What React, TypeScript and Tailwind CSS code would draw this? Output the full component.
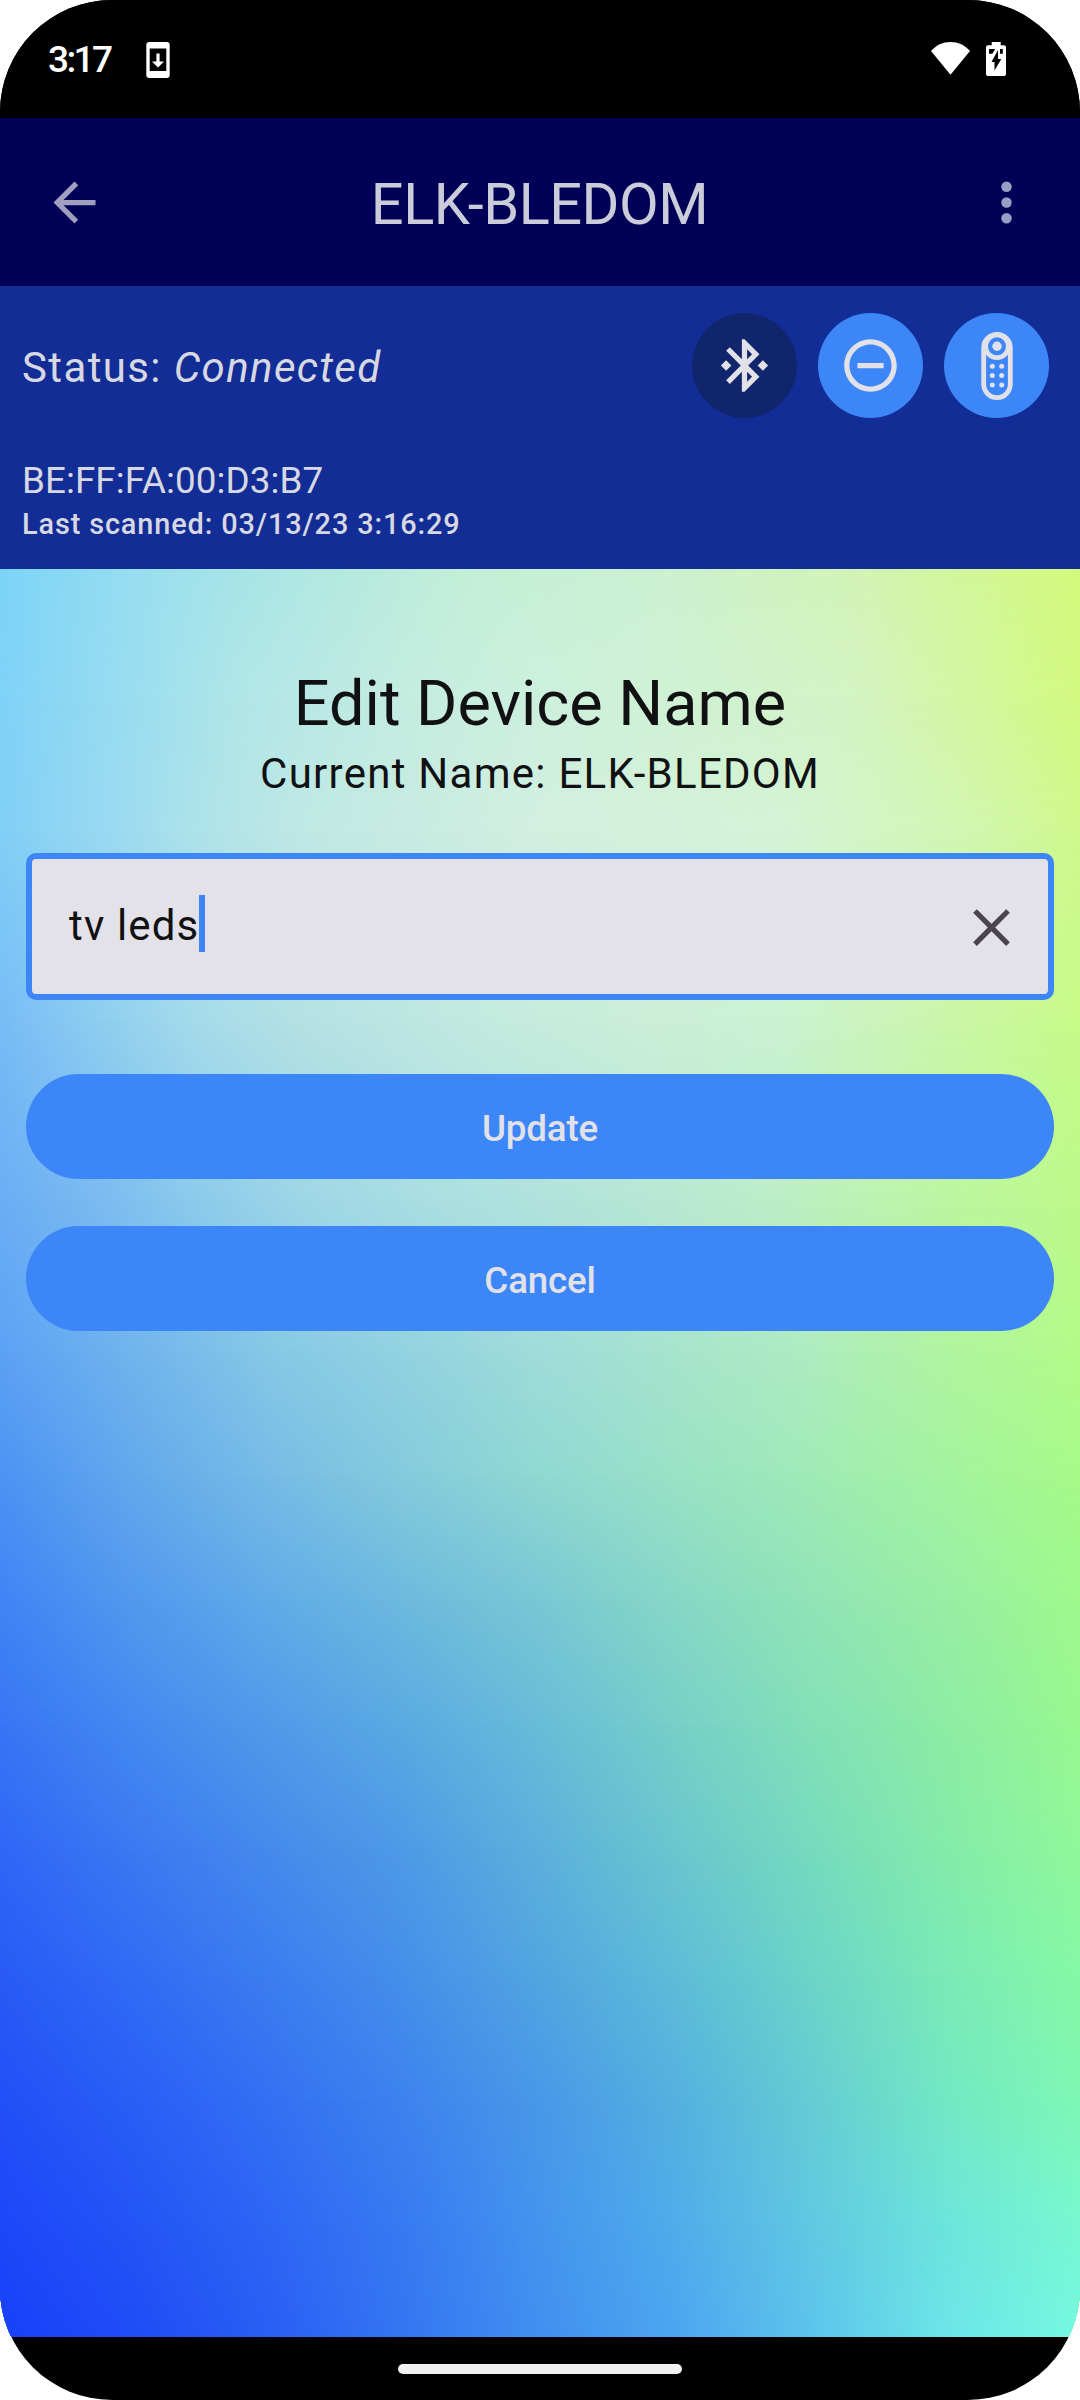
import React from "react";

// Mesh backdrop: each band is a horizontal gradient that fades in over the one above it.
const bands = [
  "bg-[linear-gradient(90deg,#7cd4f8_0%,#9de0ee_15%,#b2e9e0_30%,#c5efd8_44%,#ccf1d2_61%,#d2f4b4_80%,#d3f890_93%,#d2fb7c_100%)]",
  "bg-[linear-gradient(90deg,#7fd2f8_0%,#b0e6e8_22%,#c4ece0_37%,#cdf0de_50%,#d3f3c6_78%,#d2fa80_100%)] mask-[linear-gradient(180deg,transparent_0px,black_131px)]",
  "bg-[linear-gradient(90deg,#80cff6_0%,#98d8f2_9%,#ace2ea_18%,#c0e8e4_28%,#d2efe0_50%,#d4f3d6_72%,#d2f5c4_81%,#d1f6ac_91%,#cff98c_100%)] mask-[linear-gradient(180deg,transparent_131px,black_261px)]",
  "bg-[linear-gradient(90deg,#76bcf6_0%,#8ecdf0_9%,#a4dbea_18%,#b4e1e4_28%,#c4eadf_45%,#cceed9_60%,#cbf2d2_72%,#ccf4bc_81%,#caf7a0_91%,#c7fa88_100%)] mask-[linear-gradient(180deg,transparent_261px,black_451px)]",
  "bg-[linear-gradient(90deg,#6aaef5_0%,#7abaf0_9%,#8ccaec_18%,#9ed6e6_28%,#aadfe2_41%,#b8e8d2_63%,#bceec6_72%,#bcf3b0_81%,#bcf79a_91%,#bdf98a_100%)] mask-[linear-gradient(180deg,transparent_451px,black_631px)]",
  "bg-[linear-gradient(90deg,#5ba2f4_0%,#86c8e6_25%,#a0dcda_50%,#aeecc0_75%,#b0f4a0_87.5%,#b2fb88_100%)] mask-[linear-gradient(180deg,transparent_631px,black_781px)]",
  "bg-[linear-gradient(90deg,#4c93f4_0%,#62a9ec_12.5%,#76bce6_25%,#84cbdc_37.5%,#90d8d2_50%,#9ae1c6_62.5%,#a0eab6_75%,#a4f3a0_87.5%,#a7fa88_100%)] mask-[linear-gradient(180deg,transparent_781px,black_906px)]",
  "bg-[linear-gradient(90deg,#4084f5_0%,#5299ee_12.5%,#60abe8_25%,#6cbade_37.5%,#78c8d4_50%,#86d8c6_62.5%,#90e4b6_75%,#98eea4_87.5%,#9ef98c_100%)] mask-[linear-gradient(180deg,transparent_906px,black_1031px)]",
  "bg-[linear-gradient(90deg,#3775f5_0%,#4489f0_12.5%,#509ae9_25%,#5aaae2_37.5%,#68bcd8_50%,#76cfc8_62.5%,#82e0b8_75%,#8ceca4_87.5%,#97f890_100%)] mask-[linear-gradient(180deg,transparent_1031px,black_1156px)]",
  "bg-[linear-gradient(90deg,#2f67f6_0%,#3a79f2_12.5%,#458aec_25%,#4e9ae6_37.5%,#5cb0dc_50%,#6ac6ce_62.5%,#76dabe_75%,#84ebaa_87.5%,#90f89a_100%)] mask-[linear-gradient(180deg,transparent_1156px,black_1281px)]",
  "bg-[linear-gradient(90deg,#285bf6_0%,#306cf4_12.5%,#3b7df0_25%,#458fea_37.5%,#52a5e0_50%,#5ebcd8_62.5%,#6cd4c8_75%,#7aeab6_87.5%,#86f8a6_100%)] mask-[linear-gradient(180deg,transparent_1281px,black_1406px)]",
  "bg-[linear-gradient(90deg,#2250f7_0%,#295ff6_12.5%,#3370f3_25%,#3d83ee_37.5%,#4998e8_50%,#55b0df_62.5%,#64ccd4_75%,#72e8c4_87.5%,#7ef8b4_100%)] mask-[linear-gradient(180deg,transparent_1406px,black_1531px)]",
  "bg-[linear-gradient(90deg,#1d47f8_0%,#2355f6_12.5%,#2d66f4_25%,#377af2_37.5%,#4494ee_50%,#50acea_62.5%,#60c8e2_75%,#6ce4dc_87.5%,#78f8d0_100%)] mask-[linear-gradient(180deg,transparent_1531px,black_1656px)]",
  "bg-[linear-gradient(90deg,#1940f8_0%,#1f4df6_12.5%,#295ff4_25%,#3476f2_37.5%,#428ff0_50%,#4da5f0_62.5%,#5cc4ec_75%,#6ce4e8_87.5%,#76f8e2_100%)] mask-[linear-gradient(180deg,transparent_1656px,black_1767px)]",
];

function StatusBar() {
  return (
    <div className="flex h-[118px] items-start justify-between bg-black pr-[74px] pl-[48px] text-white">
      <div className="flex items-start">
        <span className="mt-[38px] w-[98px] text-[37px] leading-[44px] font-medium tracking-[-2.6px]">3:17</span>
        <svg className="mt-[42px] h-9 w-6" viewBox="0 0 24 36">
          <path fill="currentColor" fillRule="evenodd" d="M3.3 0H20.7A3 3 0 0 1 23.7 3V33A3 3 0 0 1 20.7 36H3.300A3 3 0 0 1 .3 33V3A3 3 0 0 1 3.300 0ZM3.700 6.500V29H20.300V6.500Z" />
          <path fill="currentColor" d="M10.400 11.500h3.200v8h4.400l-6 6-6-6h4.400z" />
        </svg>
      </div>
      <div className="mt-[42px] flex gap-4">
        <svg className="h-[34px] w-[39px]" viewBox="0 0 39 34">
          <path fill="currentColor" d="M19.500 32.700 0 9C5 3.200 12 0 19.500 0S34 3.200 39 9Z" />
        </svg>
        <svg className="h-[34px] w-5" viewBox="0 0 20 34">
          <path fill="currentColor" d="M5.700 0h9v3.300H18a2 2 0 0 1 2 2V32a2 2 0 0 1-2 2H2a2 2 0 0 1-2-2V5.300a2 2 0 0 1 2-2h3.700z" />
          <path fill="#000" d="M3 7h6.200l-2.900 4.700H3zM14 7h2.800v4.700H14zM12 8v9h3.300L8.500 28.500V20H5.500z" />
        </svg>
      </div>
    </div>
  );
}

function AppBar() {
  return (
    <header className="flex h-[168px] items-center justify-between bg-[#000056] pr-[42px] pl-[43px]">
      <svg className="size-[63px] text-[#a09fbf]" viewBox="0 0 24 24" fill="currentColor">
        <path d="M20 11H7.830l5.590-5.590L12 4l-8 8 8 8 1.410-1.410L7.830 13H20v-2z" />
      </svg>
      <h1 className="mt-1 mr-[2px] text-[57.75px] leading-[74px] tracking-[-0.5px] text-[#cbccd9]">ELK-BLEDOM</h1>
      <svg className="size-[63px] text-[#969fc4]" viewBox="0 0 24 24" fill="currentColor">
        <circle cx="12" cy="6" r="2" />
        <circle cx="12" cy="12" r="2" />
        <circle cx="12" cy="18" r="2" />
      </svg>
    </header>
  );
}

function BluetoothIcon() {
  return (
    <svg className="size-[63px]" viewBox="0 0 24 24" fill="currentColor">
      <path d="M7 12l-2-2-2 2 2 2 2-2zm10.710-4.290L12 2h-1v7.590L6.410 5 5 6.410 10.590 12 5 17.590 6.410 19 11 14.410V22h1l5.710-5.710-4.300-4.290 4.300-4.290zM13 5.830l1.880 1.880L13 9.590V5.830zm1.880 10.460L13 18.170v-3.760l1.880 1.880zM19 10l-2 2 2 2 2-2-2-2z" />
    </svg>
  );
}

function DisconnectIcon() {
  return (
    <svg className="size-[63px]" viewBox="0 0 24 24" fill="currentColor">
      <path d="M7 11v2h10v-2H7zm5-9C6.480 2 2 6.480 2 12s4.480 10 10 10 10-4.480 10-10S17.520 2 12 2zm0 18c-4.410 0-8-3.590-8-8s3.590-8 8-8 8 3.590 8 8-3.590 8-8 8z" />
    </svg>
  );
}

function RemoteIcon() {
  return (
    <svg className="h-[70px] w-[34px]" viewBox="0 0 34 70" fill="none" stroke="currentColor">
      <rect x="3.700" y="3.400" width="26.600" height="63.200" rx="13.300" strokeWidth="4.800" />
      <circle cx="17" cy="15.300" r="11.400" strokeWidth="4.800" />
      <g fill="currentColor" stroke="none">
        <circle cx="17" cy="15.300" r="4.700" />
        <circle cx="12.300" cy="35.300" r="2.500" />
        <circle cx="21.700" cy="35.300" r="2.500" />
        <circle cx="12.300" cy="44.600" r="2.500" />
        <circle cx="21.700" cy="44.600" r="2.500" />
        <circle cx="12.300" cy="54" r="2.500" />
        <circle cx="21.700" cy="54" r="2.500" />
      </g>
    </svg>
  );
}

function RoundButton({ label, dark, children }: { label: string; dark?: boolean; children: React.ReactNode }) {
  return (
    <button
      aria-label={label}
      className={`flex size-[105px] items-center justify-center rounded-full text-[#e2e1e8] ${dark ? "bg-[#10256c]" : "bg-[#3c86f7]"}`}
    >
      {children}
    </button>
  );
}

function DevicePanel() {
  return (
    <section className="h-[283px] bg-[#122e96] pt-[27px] pr-[31px] pl-[22px] text-[#d8d8e2]">
      <div className="flex h-[105px] items-center justify-between">
        <p className="mt-1 text-[42px] leading-[63px] tracking-[1.37px]">
          Status: <em>Connected</em>
        </p>
        <div className="flex gap-[21px]">
          <RoundButton label="Bluetooth" dark>
            <BluetoothIcon />
          </RoundButton>
          <RoundButton label="Disconnect">
            <DisconnectIcon />
          </RoundButton>
          <RoundButton label="Remote">
            <RemoteIcon />
          </RoundButton>
        </div>
      </div>
      <p className="mt-[39px] text-[36.75px] leading-[48px] tracking-[0.08px]">BE:FF:FA:00:D3:B7</p>
      <p className="mt-[-1px] text-[28.875px] leading-[40px] font-medium tracking-[0.88px]">Last scanned: 03/13/23 3:16:29</p>
    </section>
  );
}

function ActionButton({ children }: { children: React.ReactNode }) {
  return (
    <button className="h-[105px] rounded-full bg-[#3c86f7] pt-[5px] text-[36.75px] leading-[52px] font-medium tracking-[-0.2px] text-[#e2e1e8]">
      {children}
    </button>
  );
}

function EditForm() {
  return (
    <div className="z-10 col-start-1 row-start-1 flex flex-col px-[26px] pt-[93px] text-[#111113]">
      <h2 className="text-center text-[63px] leading-[84px]">Edit Device Name</h2>
      <p className="mt-[-4px] text-center text-[42px] leading-[63px] tracking-[1.26px]">Current Name: ELK-BLEDOM</p>
      <div className="mt-[48px] flex h-[147px] items-center justify-between rounded-[10px] border-6 border-[#3c86f7] bg-[#e3e2e9] pr-[25px] pl-[37px]">
        <div className="flex items-center">
          <span className="mt-[-2px] text-[42px] leading-[63px] tracking-[1.15px]">tv leds</span>
          <span className="mt-[-6px] h-[57px] w-[6px] bg-[#3c86f7]" />
        </div>
        <svg className="mt-[2px] size-[63px] text-[#4b454d]" viewBox="0 0 24 24" fill="currentColor">
          <path d="M19 6.410L17.590 5 12 10.590 6.410 5 5 6.410 10.590 12 5 17.590 6.410 19 12 13.410 17.590 19 19 17.590 13.410 12z" />
        </svg>
      </div>
      <div className="mt-[74px] flex flex-col gap-[47px]">
        <ActionButton>Update</ActionButton>
        <ActionButton>Cancel</ActionButton>
      </div>
    </div>
  );
}

export default function App() {
  return (
    <div className="h-[2400px] w-[1080px] bg-white">
      <div className="flex h-full flex-col overflow-hidden rounded-[112px] bg-black font-[Roboto,sans-serif] whitespace-nowrap">
        <StatusBar />
        <AppBar />
        <DevicePanel />
        <main className="grid h-[1768px] grid-cols-1 grid-rows-1">
          {bands.map((band) => (
            <div key={band} className={`col-start-1 row-start-1 ${band}`} />
          ))}
          <EditForm />
        </main>
        <div className="flex h-[63px] items-center justify-center">
          <div className="h-[10px] w-[284px] rounded-full bg-[#f1f1f1]" />
        </div>
      </div>
    </div>
  );
}
